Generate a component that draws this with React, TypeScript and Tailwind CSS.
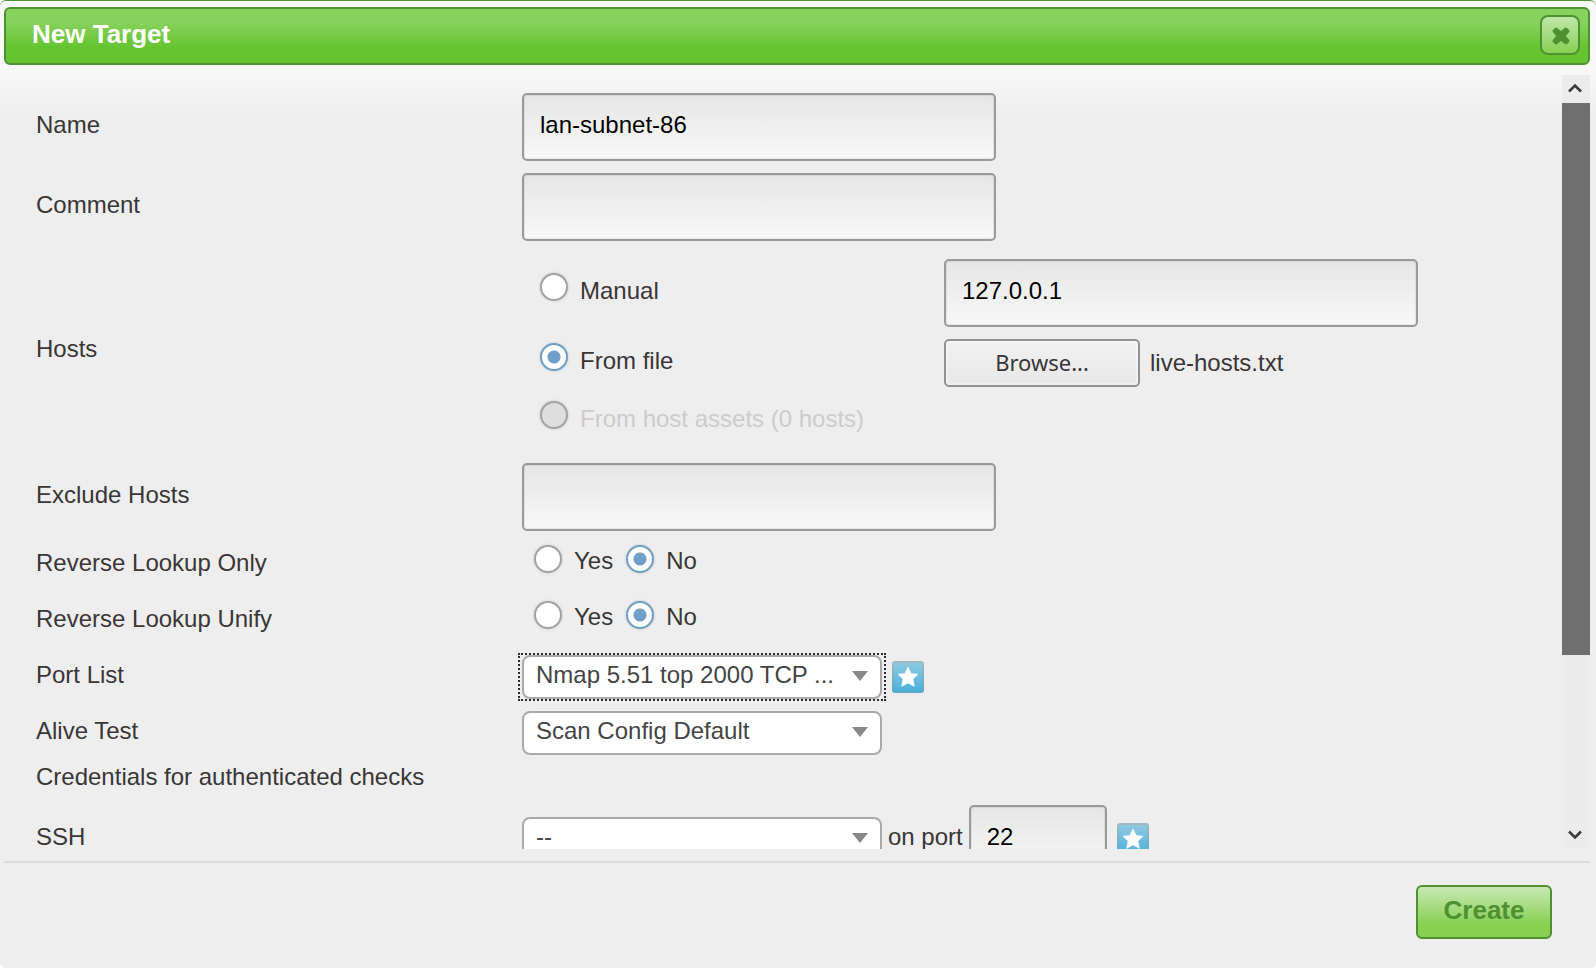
import React from "react";

const inputClass =
  "h-[68px] rounded-[5px] border-2 border-[#9a9a9a] bg-linear-to-b from-[#e6e6e6] to-[#f8f8f8] pl-4 pr-3 pb-1 text-[24px] text-black shadow-[inset_0_0_1px_1px_rgba(0,0,0,0.07)] outline-none";

const radioClass =
  "h-[28px] w-[28px] shrink-0 appearance-none rounded-full border-2 border-[#a3a3a3] bg-white shadow-[0_0_2px_1px_rgba(0,0,0,0.08)] checked:border-[#6f9fc9] checked:bg-[radial-gradient(circle_at_center,#6f9fc9_6px,#ffffff_7px)] disabled:bg-[#dedede]";

function Row({
  label,
  htmlFor,
  labelClass,
  children,
}: {
  label: string;
  htmlFor?: string;
  labelClass: string;
  children?: React.ReactNode;
}) {
  return (
    <div className="flex shrink-0 items-start">
      <div className={"w-[486px] shrink-0 leading-[28px] " + labelClass}>
        {htmlFor ? <label htmlFor={htmlFor}>{label}</label> : <span>{label}</span>}
      </div>
      {children}
    </div>
  );
}

function Radio({
  id,
  name,
  label,
  labelClass,
  checked,
  disabled,
}: {
  id: string;
  name: string;
  label: string;
  labelClass: string;
  checked?: boolean;
  disabled?: boolean;
}) {
  return (
    <div className="flex items-start gap-3">
      <input id={id} name={name} type="radio" defaultChecked={checked} disabled={disabled} className={radioClass} />
      <label htmlFor={id} className={"leading-[28px] " + labelClass}>
        {label}
      </label>
    </div>
  );
}

function YesNo({ name }: { name: string }) {
  return (
    <div className="flex h-[44px] items-start gap-[13px] pt-[2px] pl-[12px]">
      <Radio id={name + "-yes"} name={name} label="Yes" labelClass="pt-[2px]" />
      <Radio id={name + "-no"} name={name} label="No" labelClass="pt-[2px]" checked />
    </div>
  );
}

function Select({ id, value, focused }: { id: string; value: string; focused?: boolean }) {
  return (
    <div className={focused ? "-mx-[2px] px-[2px] outline-2 outline-dotted outline-[#2b2b2b]" : ""}>
      <div className="relative h-[44px] w-[360px]">
        <select
          id={id}
          className="h-[44px] w-full appearance-none rounded-[8px] border-2 border-[#aaaaaa] bg-white pr-9 pb-[6px] pl-3 text-[24px] text-[#444444] outline-none"
        >
          <option>{value}</option>
        </select>
        <svg className="pointer-events-none absolute top-[16px] right-[14px] h-[10px] w-[16px]" viewBox="0 0 16 10">
          <path d="M0 0H16L8 10Z" fill="#888888" />
        </svg>
      </div>
    </div>
  );
}

function StarButton({ label }: { label: string }) {
  return (
    <button type="button" aria-label={label} className="h-[32px] w-[32px]">
      <svg viewBox="0 0 32 32" className="h-[32px] w-[32px]">
        <defs>
          <linearGradient id="star-bg" x1="0" y1="0" x2="0" y2="1">
            <stop offset="0" stopColor="#8fcae2" />
            <stop offset="1" stopColor="#4bb0da" />
          </linearGradient>
          <linearGradient id="star-edge" x1="0" y1="0" x2="0" y2="1">
            <stop offset="0" stopColor="#9fb9c3" />
            <stop offset="1" stopColor="#5aa8c8" />
          </linearGradient>
        </defs>
        <rect x="1" y="1" width="30" height="30" rx="2" fill="url(#star-bg)" stroke="url(#star-edge)" strokeWidth="2" />
        <path
          d="M16 6L19.2 12.6L26 13.2L21 18L22.4 25.4L16 22L9.6 25.4L11 18L6 13.2L12.8 12.6Z"
          fill="#ffffff"
          stroke="#ffffff"
          strokeWidth="0.6"
          strokeLinejoin="round"
        />
      </svg>
    </button>
  );
}

export default function App() {
  return (
    <div className="flex h-screen flex-col rounded-[6px] border-t border-[#4f9032] bg-[#eeeeee] bg-linear-to-b from-[#f9f9f9] from-[64px] to-[#eeeeee] to-[115px] pt-[6px] pr-[6px] pl-1 font-['Liberation_Sans',Arial,sans-serif] text-[24px] text-[#393637]">
      <header className="flex h-[58px] shrink-0 items-start justify-between rounded-[6px] border-2 border-[#4f9032] bg-linear-to-b from-[#87d25c] from-25% to-[#66c430] to-70% pt-[6px] pr-2 pl-[26px]">
        <h1 className="text-[26px] leading-[38px] font-bold text-white">New Target</h1>
        <button
          type="button"
          aria-label="Close"
          className="flex h-[40px] w-[40px] items-center justify-center rounded-[8px] border-2 border-[#4f9032] bg-linear-to-b from-[#c0e6a9] to-[#87d050]"
        >
          <svg viewBox="0 0 18 18" className="mt-[2px] ml-[2px] h-[18px] w-[18px]">
            <path
              d="M4 2L9 6L14 2L16 4L12 9L16 14L14 16L9 12L4 16L2 14L6 9L2 4Z"
              fill="#4f9032"
              stroke="#4f9032"
              strokeWidth="3"
              strokeLinejoin="round"
            />
          </svg>
        </button>
      </header>

      <div className="mt-[10px] flex h-[774px] min-h-0 shrink overflow-hidden">
        <form className="flex min-w-0 flex-1 flex-col gap-3 pt-[18px] pl-[32px]">
          <Row label="Name" htmlFor="name" labelClass="pt-[18px]">
            <input id="name" type="text" defaultValue="lan-subnet-86" className={inputClass + " w-[474px]"} />
          </Row>
          <Row label="Comment" htmlFor="comment" labelClass="pt-[18px]">
            <input id="comment" type="text" className={inputClass + " w-[474px]"} />
          </Row>
          <Row label="Hosts" labelClass="pt-[82px]">
            <div className="grid h-[198px] grid-cols-[404px_474px] grid-rows-[68px_48px_46px] gap-y-3 py-[6px] pl-[18px]">
              <div className="pt-[14px]">
                <Radio id="manual" name="hosts" label="Manual" labelClass="pt-1" />
              </div>
              <input type="text" aria-label="Manual hosts" defaultValue="127.0.0.1" className={inputClass} />
              <div className="pt-1">
                <Radio id="file" name="hosts" label="From file" labelClass="pt-1" checked />
              </div>
              <div className="flex items-center gap-[10px]">
                <button
                  type="button"
                  className="h-[48px] w-[196px] rounded-[5px] border-2 border-[#929292] bg-linear-to-b from-[#f1f1f1] to-[#e8e8e8] pb-[2px] font-['Noto_Sans',sans-serif] text-[22px] shadow-[inset_0_0_1px_2px_rgba(255,255,255,0.4)]"
                >
                  Browse...
                </button>
                <span>live-hosts.txt</span>
              </div>
              <div className="pt-[2px]">
                <Radio
                  id="assets"
                  name="hosts"
                  label="From host assets (0 hosts)"
                  labelClass="pt-1 text-[#cccccc]"
                  disabled
                />
              </div>
            </div>
          </Row>
          <Row label="Exclude Hosts" htmlFor="exclude" labelClass="pt-[18px]">
            <input id="exclude" type="text" className={inputClass + " w-[474px]"} />
          </Row>
          <Row label="Reverse Lookup Only" labelClass="pt-[6px]">
            <YesNo name="lookup-only" />
          </Row>
          <Row label="Reverse Lookup Unify" labelClass="pt-[6px]">
            <YesNo name="lookup-unify" />
          </Row>
          <Row label="Port List" htmlFor="port-list" labelClass="pt-[6px]">
            <div className="flex items-center gap-[10px]">
              <div>
                <Select id="port-list" value="Nmap 5.51 top 2000 TCP ..." focused />
              </div>
              <StarButton label="Create a new port list" />
            </div>
          </Row>
          <Row label="Alive Test" htmlFor="alive" labelClass="pt-[6px]">
            <Select id="alive" value="Scan Config Default" />
          </Row>
          <h2 className="h-[26px] shrink-0 leading-[20px]">Credentials for authenticated checks</h2>
          <Row label="SSH" htmlFor="ssh" labelClass="pt-[18px]">
            <div className="flex items-start">
              <div className="pt-3">
                <Select id="ssh" value="--" />
              </div>
              <label htmlFor="ssh-port" className="px-[6px] pt-[18px] leading-[28px]">
                on port
              </label>
              <input id="ssh-port" type="text" defaultValue="22" className={inputClass + " w-[138px]"} />
              <div className="pt-[18px] pl-[10px]">
                <StarButton label="Create a new credential" />
              </div>
            </div>
          </Row>
        </form>

        <div className="flex w-[28px] shrink-0 flex-col bg-[#ececec]">
          <button type="button" aria-label="Scroll up" className="flex h-[28px] items-center justify-center pr-[2px] pb-[2px]">
            <svg viewBox="0 0 14 10" className="h-[10px] w-[14px]">
              <path d="M1 8.5L7 2.5L13 8.5" fill="none" stroke="#3c3c3c" strokeWidth="2.6" />
            </svg>
          </button>
          <div className="h-[552px] shrink bg-[#6f6f6f]" />
          <div className="flex-1" />
          <button type="button" aria-label="Scroll down" className="flex h-[28px] items-center justify-center pr-[2px]">
            <svg viewBox="0 0 14 10" className="h-[10px] w-[14px]">
              <path d="M1 1.5L7 7.5L13 1.5" fill="none" stroke="#3c3c3c" strokeWidth="2.6" />
            </svg>
          </button>
        </div>
      </div>

      <footer className="mt-3 flex flex-1 items-start justify-end border-t-2 border-[#dcdcdc] pt-[22px] pr-[38px]">
        <button
          type="button"
          className="h-[54px] w-[136px] rounded-[6px] border-2 border-[#4f9032] bg-linear-to-b from-[#c8e8b2] to-[#87d050] to-75% pb-1 text-[26px] font-bold text-[#4f9032]"
        >
          Create
        </button>
      </footer>
    </div>
  );
}
